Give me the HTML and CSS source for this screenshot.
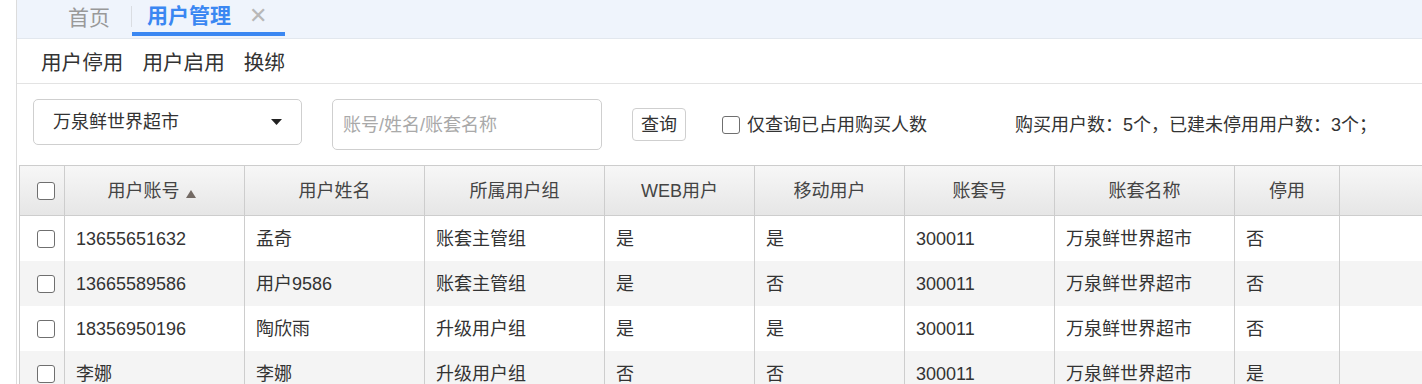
FILE: index.html
```html
<!DOCTYPE html>
<html lang="zh-CN">
<head>
<meta charset="utf-8">
<title>用户管理</title>
<link rel="stylesheet" href="styles.css">
</head>
<body>
<div class="app">
  <aside class="side"></aside>
  <main class="main">
    <nav class="tabbar">
      <span class="tab">首页</span>
      <span class="tab-sep"></span>
      <span class="tab tab-active">用户管理<span class="tab-close">✕</span></span>
    </nav>
    <div class="toolbar">
      <span class="tool">用户停用</span>
      <span class="tool">用户启用</span>
      <span class="tool">换绑</span>
    </div>
    <div class="filters">
      <div class="select">
        <span>万泉鲜世界超市</span>
        <svg class="caret" width="11" height="6" viewBox="0 0 11 6"><polygon points="0,0 11,0 5.5,6" fill="#222"/></svg>
      </div>
      <div class="search"><span class="placeholder">账号/姓名/账套名称</span></div>
      <button class="btn">查询</button>
      <label class="check-label"><span class="cb"></span>仅查询已占用购买人数</label>
      <span class="stats">购买用户数：5个，已建未停用用户数：3个；</span>
    </div>
    <div class="grid">
      <div class="row head">
        <div class="cell c-cb"><span class="cb"></span></div>
        <div class="cell sorted">用户账号<svg class="sort" width="10" height="8" viewBox="0 0 10 8"><polygon points="5,0 10,8 0,8" fill="#736a64"/></svg></div>
        <div class="cell">用户姓名</div>
        <div class="cell">所属用户组</div>
        <div class="cell">WEB用户</div>
        <div class="cell">移动用户</div>
        <div class="cell">账套号</div>
        <div class="cell">账套名称</div>
        <div class="cell">停用</div>
        <div class="cell"></div>
      </div>
      <div class="row">
        <div class="cell c-cb"><span class="cb"></span></div>
        <div class="cell">13655651632</div>
        <div class="cell">孟奇</div>
        <div class="cell">账套主管组</div>
        <div class="cell">是</div>
        <div class="cell">是</div>
        <div class="cell">300011</div>
        <div class="cell">万泉鲜世界超市</div>
        <div class="cell">否</div>
        <div class="cell"></div>
      </div>
      <div class="row alt">
        <div class="cell c-cb"><span class="cb"></span></div>
        <div class="cell">13665589586</div>
        <div class="cell">用户9586</div>
        <div class="cell">账套主管组</div>
        <div class="cell">是</div>
        <div class="cell">否</div>
        <div class="cell">300011</div>
        <div class="cell">万泉鲜世界超市</div>
        <div class="cell">否</div>
        <div class="cell"></div>
      </div>
      <div class="row">
        <div class="cell c-cb"><span class="cb"></span></div>
        <div class="cell">18356950196</div>
        <div class="cell">陶欣雨</div>
        <div class="cell">升级用户组</div>
        <div class="cell">是</div>
        <div class="cell">是</div>
        <div class="cell">300011</div>
        <div class="cell">万泉鲜世界超市</div>
        <div class="cell">否</div>
        <div class="cell"></div>
      </div>
      <div class="row alt">
        <div class="cell c-cb"><span class="cb"></span></div>
        <div class="cell">李娜</div>
        <div class="cell">李娜</div>
        <div class="cell">升级用户组</div>
        <div class="cell">否</div>
        <div class="cell">否</div>
        <div class="cell">300011</div>
        <div class="cell">万泉鲜世界超市</div>
        <div class="cell">是</div>
        <div class="cell"></div>
      </div>
    </div>
  </main>
</div>
</body>
</html>
```

FILE: styles.css
```css
* { box-sizing: border-box; }
html, body { margin: 0; padding: 0; background: #fff; }
body {
  font-family: "Liberation Sans", "Noto Sans CJK SC", sans-serif;
  font-size: 18px;
  line-height: 20px;
  color: #333;
  overflow: hidden;
  height: 384px;
}
.app { display: flex; height: 384px; }
.side { width: 17px; flex: none; border-right: 1px solid #dcdcdc; background: #fff; }
.main { flex: 1; min-width: 0; display: flex; flex-direction: column; }

.tabbar {
  height: 39px;
  background: #eff4fc;
  border-bottom: 1px solid #e2e7ee;
  display: flex;
  align-items: flex-start;
  padding-left: 51px;
  flex: none;
}
.tab {
  height: 36px;
  line-height: 34px;
  font-size: 21px;
  color: #999;
  display: flex;
  align-items: center;
}
.tab-sep {
  width: 1px;
  height: 21px;
  background: #dadde2;
  margin: 6px 0 0 21px;
}
.tab-active {
  color: #3a87f2;
  font-weight: bold;
  padding: 0 18px 0 15px;
  border-bottom: 4px solid #3a87f2;
}
.tab-close {
  font-weight: normal;
  color: #b8b8b8;
  font-size: 22px;
  margin-left: 18px;
}

.toolbar {
  height: 45px;
  border-bottom: 1px solid #e3e3e3;
  display: flex;
  align-items: center;
  gap: 19px;
  padding: 3px 0 0 24px;
  font-size: 20.6px;
  color: #333;
  flex: none;
}

.filters {
  display: flex;
  align-items: center;
  padding: 15px 0 15px 16px;
  height: 81px;
  flex: none;
}
.select {
  align-self: flex-start;
  width: 269px;
  height: 46px;
  border: 1px solid #cfcfcf;
  border-radius: 5px;
  display: flex;
  align-items: center;
  justify-content: space-between;
  padding: 0 19px 0 19px;
  color: #333;
}
.caret { display: block; }
.search {
  width: 270px;
  height: 51px;
  margin-left: 30px;
  border: 1px solid #cfcfcf;
  border-radius: 5px;
  display: flex;
  align-items: center;
  padding-left: 10px;
}
.placeholder { color: #a9a9a9; }
.btn {
  margin-left: 30px;
  width: 54px;
  height: 33px;
  border: 1px solid #cfcfcf;
  border-radius: 4px;
  background: #fff;
  font: inherit;
  font-size: 18px;
  color: #333;
  padding: 0;
}
.check-label {
  margin-left: 36px;
  display: flex;
  align-items: center;
  gap: 7px;
  color: #333;
}
.stats { margin-left: 88px; color: #333; font-size: 18px; }

.cb {
  display: inline-block;
  width: 18px;
  height: 18px;
  border: 1px solid #6f6f6f;
  border-radius: 3px;
  background: #fff;
  flex: none;
}

.grid {
  margin-left: 2px;
  border-top: 1px solid #cdcdcd;
}
.row {
  display: grid;
  grid-template-columns: 45px 180px 180px 180px 150px 150px 150px 180px 105px 1fr;
  height: 45px;
}
.row.alt { background: #f4f4f4; }
.row.head {
  height: 50px;
  background: linear-gradient(#f7f7f7, #e6e6e6);
  border-bottom: 1px solid #cdcdcd;
  color: #444;
}
.cell {
  border-left: 1px solid #cdcdcd;
  display: flex;
  align-items: center;
  padding-left: 11px;
  white-space: nowrap;
}
.head .cell { justify-content: center; padding-left: 0; }
.head .sorted { padding-right: 6px; }
.row .c-cb { justify-content: flex-start; padding-left: 17px; }
.sort { margin-left: 6px; margin-top: 6px; display: block; }
```
